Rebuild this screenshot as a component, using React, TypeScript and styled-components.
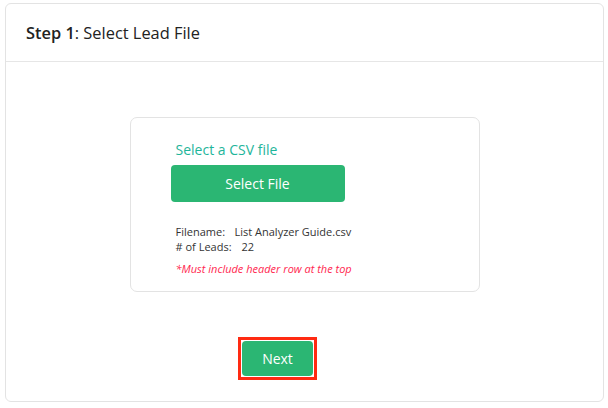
import styled, { createGlobalStyle } from "styled-components";

const Global = createGlobalStyle`
  html, body {
    margin: 0;
    padding: 0;
    background: #ffffff;
    font-family: "Open Sans", "Noto Sans", sans-serif;
  }
`;

const Page = styled.div`
  padding: 3px 4px 0 5px;
`;

const Card = styled.div`
  width: 599px;
  height: 399px;
  box-sizing: border-box;
  border: 1px solid #e3e3e3;
  border-radius: 6px;
  display: flex;
  flex-direction: column;
`;

const Header = styled.div`
  height: 58px;
  box-sizing: border-box;
  border-bottom: 1px solid #e6e6e6;
  display: flex;
  align-items: center;
  padding-left: 20px;
  font-size: 16.4px;
  color: #222;

  b {
    font-weight: 600;
  }
`;

const Body = styled.div`
  flex: 1;
  display: flex;
  flex-direction: column;
  align-items: center;
  padding-top: 55px;
`;

const UploadBox = styled.div`
  width: 350px;
  height: 175px;
  box-sizing: border-box;
  border: 1px solid #e3e3e3;
  border-radius: 7px;
  padding: 22px 0 0 40px;
`;

const Label = styled.div`
  font-size: 14px;
  line-height: 20px;
  color: #1eb59a;
  padding-left: 5px;
`;

const Button = styled.button<{ $w: number; $h: number }>`
  width: ${(p) => p.$w}px;
  height: ${(p) => p.$h}px;
  border: none;
  border-radius: 4px;
  background: #2bb673;
  color: #fff;
  font-family: inherit;
  font-size: 14px;
  padding: 0;
  display: block;
`;

const Details = styled.div`
  margin-top: 22px;
  padding-left: 5px;
  font-size: 11px;
  line-height: 15px;
  color: #333;
`;

const Row = styled.div`
  display: flex;
`;

const Key = styled.span<{ $w: number }>`
  width: ${(p) => p.$w}px;
`;

const Note = styled.div`
  margin-top: 7px;
  font-style: italic;
  color: #ff2850;
`;

const NextWrap = styled.div`
  margin-top: 45px;
  margin-right: 54px;
  border: 3px solid #ff2a12;
  padding: 1px;
`;

export default function App() {
  return (
    <Page>
      <Global />
      <Card>
        <Header>
          <span>
            <b>Step 1</b>: Select Lead File
          </span>
        </Header>
        <Body>
          <UploadBox>
            <Label>Select a CSV file</Label>
            <Button $w={174} $h={37} style={{ marginTop: 5 }}>
              Select File
            </Button>
            <Details>
              <Row>
                <Key $w={59}>Filename:</Key>
                <span>List Analyzer Guide.csv</span>
              </Row>
              <Row>
                <Key $w={66}># of Leads:</Key>
                <span>22</span>
              </Row>
              <Note>*Must include header row at the top</Note>
            </Details>
          </UploadBox>
          <NextWrap>
            <Button $w={71} $h={35}>
              Next
            </Button>
          </NextWrap>
        </Body>
      </Card>
    </Page>
  );
}
